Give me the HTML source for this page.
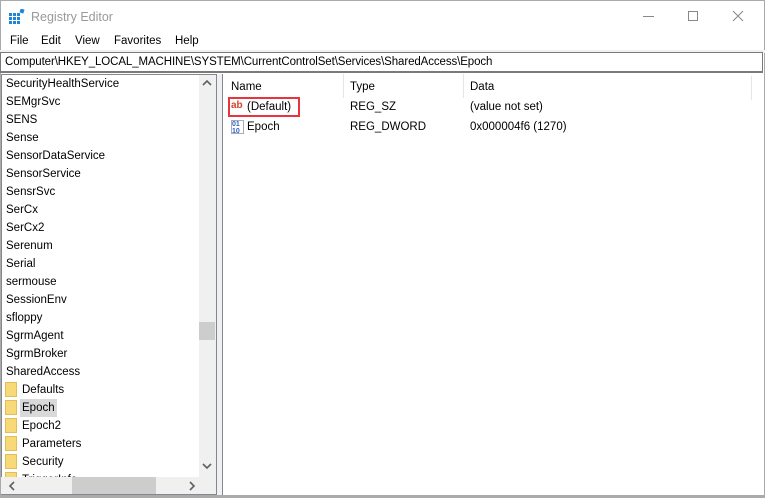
<!DOCTYPE html>
<html><head><style>
*{margin:0;padding:0;box-sizing:border-box}
body{width:765px;height:498px;background:#fff;font-family:"Liberation Sans",Arial,sans-serif;font-size:11.5px;color:#000;position:relative;overflow:hidden}
.abs{position:absolute}
.win{border:1px solid #aaa;left:0;top:0;width:765px;height:498px}
.title{left:31px;top:10px;font-size:12.5px;color:#999}
.menu span{position:absolute;top:35px;font-size:11.5px}
.addr{left:0;top:52px;width:763px;height:21px;border:1px solid #7a7a7a;border-width:1px 1px 2px 1px;padding:3px 4px;font-size:11.5px;letter-spacing:-0.1px;background:#fff}
.tree{left:1px;top:74px;width:216px;height:421px;border:1px solid #828790;overflow:hidden;background:#fff}
.row{position:absolute;left:4px;height:18px;line-height:18px;font-size:11.5px}
.fold{position:absolute;left:3px;width:12px;height:15px;background:#f8d978;border:1px solid #e3bd5a}
.right{left:222px;top:74px;width:542px;height:421px;border-left:1px solid #828790}
.vs{left:199px;top:75px;width:17px;height:402px;background:#f0f0f0}
.hs{left:1px;top:477px;width:215px;height:17px;background:#f0f0f0}
</style></head><body>
<div class="abs win"></div>
<svg class="abs" style="left:9px;top:9px" width="16" height="16"><g fill="#1e86d6"><rect x="0" y="4" width="3" height="3"/><rect x="4" y="4" width="3" height="3"/><rect x="8" y="4" width="3" height="3"/><rect x="0" y="8" width="3" height="3"/><rect x="4" y="8" width="3" height="3"/><rect x="8" y="8" width="3" height="3"/><rect x="0" y="12" width="3" height="3"/><rect x="4" y="12" width="3" height="3"/><rect x="8" y="12" width="3" height="3"/><rect x="11" y="0" width="4" height="4" transform="rotate(20 13 2)"/></g></svg>
<div class="abs title">Registry Editor</div>
<svg class="abs" style="left:640px;top:8px" width="110" height="16"><line x1="3" y1="8.5" x2="14" y2="8.5" stroke="#888"/><rect x="48.5" y="3.5" width="9" height="9" fill="none" stroke="#888"/><path d="M93 3 L103 13 M103 3 L93 13" stroke="#888"/></svg>
<div class="menu"><span style="left:10px">File</span><span style="left:41px">Edit</span><span style="left:75px">View</span><span style="left:114px">Favorites</span><span style="left:175px">Help</span></div>
<div class="abs" style="left:0;top:50px;width:765px;height:3px;background:#f0f0f0"></div>
<div class="abs addr">Computer\HKEY_LOCAL_MACHINE\SYSTEM\CurrentControlSet\Services\SharedAccess\Epoch</div>
<div class="abs tree">
<div class="row" style="top:0">SecurityHealthService</div>
<div class="row" style="top:18px">SEMgrSvc</div>
<div class="row" style="top:36px">SENS</div>
<div class="row" style="top:54px">Sense</div>
<div class="row" style="top:72px">SensorDataService</div>
<div class="row" style="top:90px">SensorService</div>
<div class="row" style="top:108px">SensrSvc</div>
<div class="row" style="top:126px">SerCx</div>
<div class="row" style="top:144px">SerCx2</div>
<div class="row" style="top:162px">Serenum</div>
<div class="row" style="top:180px">Serial</div>
<div class="row" style="top:198px">sermouse</div>
<div class="row" style="top:216px">SessionEnv</div>
<div class="row" style="top:234px">sfloppy</div>
<div class="row" style="top:252px">SgrmAgent</div>
<div class="row" style="top:270px">SgrmBroker</div>
<div class="row" style="top:288px">SharedAccess</div>
<div class="fold" style="top:307px"></div><div class="row" style="top:306px;left:20px">Defaults</div>
<div class="fold" style="top:325px"></div><div class="row" style="top:324px;left:18px;background:#d9d9d9;padding:0 2px">Epoch</div>
<div class="fold" style="top:343px"></div><div class="row" style="top:342px;left:20px">Epoch2</div>
<div class="fold" style="top:361px"></div><div class="row" style="top:360px;left:20px">Parameters</div>
<div class="fold" style="top:379px"></div><div class="row" style="top:378px;left:20px">Security</div>
<div class="fold" style="top:397px"></div><div class="row" style="top:396px;left:20px">TriggerInfo</div>
</div>
<div class="abs vs"><div class="abs" style="left:0;top:247px;width:16px;height:18px;background:#cdcdcd"></div>
<svg class="abs" style="left:3px;top:4px" width="10" height="8"><path d="M1 6 L5 2 L9 6" stroke="#606060" stroke-width="1.6" fill="none"/></svg>
<svg class="abs" style="left:3px;top:387px" width="10" height="8"><path d="M1 2 L5 6 L9 2" stroke="#606060" stroke-width="1.6" fill="none"/></svg></div>
<div class="abs hs"><div class="abs" style="left:71px;top:0;width:84px;height:17px;background:#cdcdcd"></div>
<svg class="abs" style="left:7px;top:4px" width="8" height="10"><path d="M6 1 L2 5 L6 9" stroke="#606060" stroke-width="1.6" fill="none"/></svg>
<svg class="abs" style="left:187px;top:4px" width="8" height="10"><path d="M2 1 L6 5 L2 9" stroke="#606060" stroke-width="1.6" fill="none"/></svg></div>
<div class="abs" style="left:199px;top:477px;width:17px;height:17px;background:#f0f0f0"></div>
<div class="abs" style="left:217px;top:74px;width:5px;height:422px;background:#f0f0f0"></div>
<div class="abs right">
<div class="abs" style="left:8px;top:7px">Name</div>
<div class="abs" style="left:120px;top:0;width:1px;height:24px;background:#e5e5e5"></div>
<div class="abs" style="left:127px;top:7px">Type</div>
<div class="abs" style="left:240px;top:0;width:1px;height:24px;background:#e5e5e5"></div>
<div class="abs" style="left:247px;top:7px">Data</div>
<div class="abs" style="left:528px;top:2px;width:1px;height:24px;background:#e5e5e5"></div>
<div class="abs" style="left:5px;top:23px;width:72px;height:20px;border:2px solid #e8343c"></div>
<div class="abs" style="left:8px;top:26px;width:13px;height:14px;font-size:10px;font-weight:bold;color:#d0452b;line-height:11px">ab</div>
<div class="abs" style="left:24px;top:27px">(Default)</div>
<div class="abs" style="left:127px;top:27px">REG_SZ</div>
<div class="abs" style="left:247px;top:27px">(value not set)</div>
<div class="abs" style="left:8px;top:46px;width:13px;height:14px;font-size:7px;font-weight:bold;color:#2a62c5;line-height:7px;border:1px solid #aab">01<br>10</div>
<div class="abs" style="left:24px;top:47px">Epoch</div>
<div class="abs" style="left:127px;top:47px">REG_DWORD</div>
<div class="abs" style="left:247px;top:47px">0x000004f6 (1270)</div>
</div>
<div class="abs" style="left:0;top:495px;width:765px;height:3px;background:#aaa"></div>
</body></html>
